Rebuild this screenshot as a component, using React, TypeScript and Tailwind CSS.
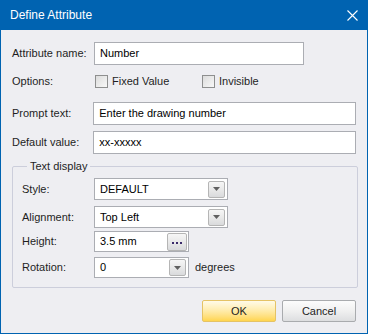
import React from 'react';

const Field = ({ value, w }: { value: string; w: string }) => (
  <div className={`h-[23px] ${w} border border-[#ABADB3] bg-white flex items-center px-[5px] text-black`}>
    {value}
  </div>
);

const Arrow = () => (
  <svg width="7" height="4" viewBox="0 0 7 4">
    <path d="M0 0h7L3.5 4z" fill="#606060" />
  </svg>
);

const MiniButton = ({ children }: { children: React.ReactNode }) => (
  <div className="w-[17px] h-[17px] border border-[#B5B5B5] rounded-[2px] bg-gradient-to-b from-[#F6F6F6] via-[#E9E9E9] to-[#D9DADC] flex items-center justify-center">
    {children}
  </div>
);

const Combo = ({ value, w, h = 'h-[22px]' }: { value: string; w: string; h?: string }) => (
  <div className={`${h} ${w} border border-[#ABADB3] bg-white flex items-center justify-between pl-[5px] pr-[2px] text-black`}>
    <span>{value}</span>
    <MiniButton>
      <Arrow />
    </MiniButton>
  </div>
);

const Check = ({ label }: { label: string }) => (
  <div className="flex items-center gap-[4px]">
    <div className="w-[13px] h-[13px] border border-[#8E8F8F] bg-gradient-to-br from-[#DCDCDC] to-[#F8F8F8]" />
    <span>{label}</span>
  </div>
);

export default function App() {
  return (
    <div className="w-[368px] h-[334px] bg-[#EEEEF2] border-x border-b border-[#0063B1] flex flex-col font-['Liberation_Sans',Arial,sans-serif] text-[11px] text-[#1E1E1E] overflow-hidden">
      {/* Title bar */}
      <div className="h-[30px] shrink-0 bg-[#0063B1] flex items-center justify-between pl-[9px] pr-[9px] text-white text-[12px]">
        <span>Define Attribute</span>
        <svg width="11" height="11" viewBox="0 0 11 11">
          <path d="M0.5 0.5l10 10M10.5 0.5l-10 10" stroke="#fff" strokeWidth="1.1" />
        </svg>
      </div>

      <div className="flex flex-col px-[11px]">
        <div className="flex items-center h-[23px] mt-[12px]">
          <span className="w-[82px]">Attribute name:</span>
          <Field value="Number" w="w-[210px]" />
        </div>

        <div className="flex items-center h-[22px] mt-[5px]">
          <span className="w-[83px]">Options:</span>
          <div className="w-[107px]">
            <Check label="Fixed Value" />
          </div>
          <Check label="Invisible" />
        </div>

        <div className="flex items-center h-[23px] mt-[10px]">
          <span className="w-[82px]">Prompt text:</span>
          <Field value="Enter the drawing number" w="w-[265px]" />
        </div>

        <div className="flex items-center h-[23px] mt-[6px]">
          <span className="w-[82px]">Default value:</span>
          <Field value="xx-xxxxx" w="w-[265px]" />
        </div>

        {/* Text display group */}
        <fieldset className="mt-[6px] w-[346px] border border-[#CCCEDB] rounded-[2px] pl-[9px] pb-[9px]">
          <legend className="ml-[5px] px-[3px] leading-[13px]">Text display</legend>
          <div className="flex items-center h-[22px] mt-[5px]">
            <span className="w-[72px]">Style:</span>
            <Combo value="DEFAULT" w="w-[134px]" />
          </div>
          <div className="flex items-center h-[22px] mt-[6px]">
            <span className="w-[72px]">Alignment:</span>
            <Combo value="Top Left" w="w-[134px]" />
          </div>
          <div className="flex items-center h-[21px] mt-[3px]">
            <span className="w-[72px]">Height:</span>
            <div className="h-[21px] w-[95px] border border-[#ABADB3] bg-white flex items-center justify-between pl-[5px] pr-[1px] text-black">
              <span>3.5 mm</span>
              <div className="w-[20px] h-[18px] border border-[#B5B5B5] rounded-[2px] bg-gradient-to-b from-[#F6F6F6] via-[#E9E9E9] to-[#D9DADC] flex items-center justify-center gap-[2px] pt-[3px]">
                <span className="w-[2px] h-[2px] bg-[#3A2A6A]" />
                <span className="w-[2px] h-[2px] bg-[#3A2A6A]" />
                <span className="w-[2px] h-[2px] bg-[#3A2A6A]" />
              </div>
            </div>
          </div>
          <div className="flex items-center h-[21px] mt-[5px]">
            <span className="w-[72px]">Rotation:</span>
            <Combo value="0" w="w-[95px]" h="h-[21px]" />
            <span className="ml-[6px]">degrees</span>
          </div>
        </fieldset>

        {/* Buttons */}
        <div className="flex justify-end gap-[6px] mt-[12px]">
          <div className="w-[74px] h-[22px] border border-[#E5C365] rounded-[2px] bg-gradient-to-b from-[#FFFBE8] via-[#FFEBA8] to-[#FFD54D] flex items-center justify-center text-[#1E1E1E]">
            OK
          </div>
          <div className="w-[74px] h-[22px] border border-[#A9ABAE] rounded-[2px] bg-gradient-to-b from-[#FCFCFC] via-[#F0F0F0] to-[#DDDEE0] flex items-center justify-center text-[#1E1E1E]">
            Cancel
          </div>
        </div>
      </div>
    </div>
  );
}
